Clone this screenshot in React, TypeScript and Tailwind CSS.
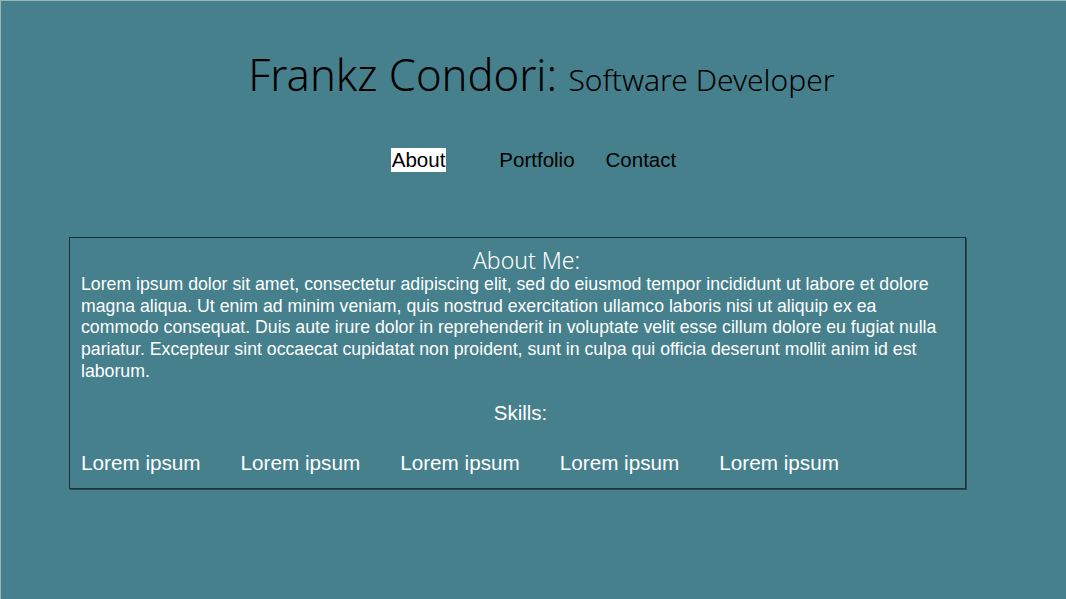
export default function App() {
  const skills = ["Lorem ipsum", "Lorem ipsum", "Lorem ipsum", "Lorem ipsum", "Lorem ipsum"];

  return (
    <div className="min-h-[599px] bg-[#46808c] border-t border-l border-[#9ab4b9] font-['Liberation_Sans',Arial,sans-serif]">
      {/* Header */}
      <header className="pt-[48px] text-center text-black font-['Noto_Sans',sans-serif] font-light">
        <h1 className="pl-[16px] leading-[50px]">
          <span className="text-[43.5px]">Frankz Condori: </span>
          <span className="text-[30px]">Software Developer</span>
        </h1>
      </header>

      {/* Nav */}
      <nav className="mt-[38px] flex justify-center text-[20.5px] text-black leading-[24px]">
        <a href="#about" className="bg-white px-[1px] mr-[53px]">
          About
        </a>
        <a href="#portfolio" className="mr-[31px]">
          Portfolio
        </a>
        <a href="#contact">Contact</a>
      </nav>

      {/* About box */}
      <section className="ml-[68px] mt-[65px] w-[897px] border border-[#1b3137] shadow-[1px_1px_0_#2a4a50] text-white pl-[11px] pr-[15px] pt-[8px] pb-[13px]">
        <h2 className="text-center pl-[22px] font-['Noto_Sans',sans-serif] font-light text-[23px] leading-[28px]">
          About Me:
        </h2>
        <p className="text-[17.7px] leading-[21.7px]">
          Lorem ipsum dolor sit amet, consectetur adipiscing elit, sed do eiusmod tempor incididunt ut labore et dolore
          magna aliqua. Ut enim ad minim veniam, quis nostrud exercitation ullamco laboris nisi ut aliquip ex ea
          commodo consequat. Duis aute irure dolor in reprehenderit in voluptate velit esse cillum dolore eu fugiat nulla
          pariatur. Excepteur sint occaecat cupidatat non proident, sunt in culpa qui officia deserunt mollit anim id est
          laborum.
        </p>
        <h3 className="mt-[18px] text-center text-[20.5px] leading-[24px] pl-[10px]">Skills:</h3>
        <ul className="mt-[26px] flex gap-[40px] text-[20.7px] leading-[24px]">
          {skills.map((s, i) => (
            <li key={i}>{s}</li>
          ))}
        </ul>
      </section>
    </div>
  );
}
